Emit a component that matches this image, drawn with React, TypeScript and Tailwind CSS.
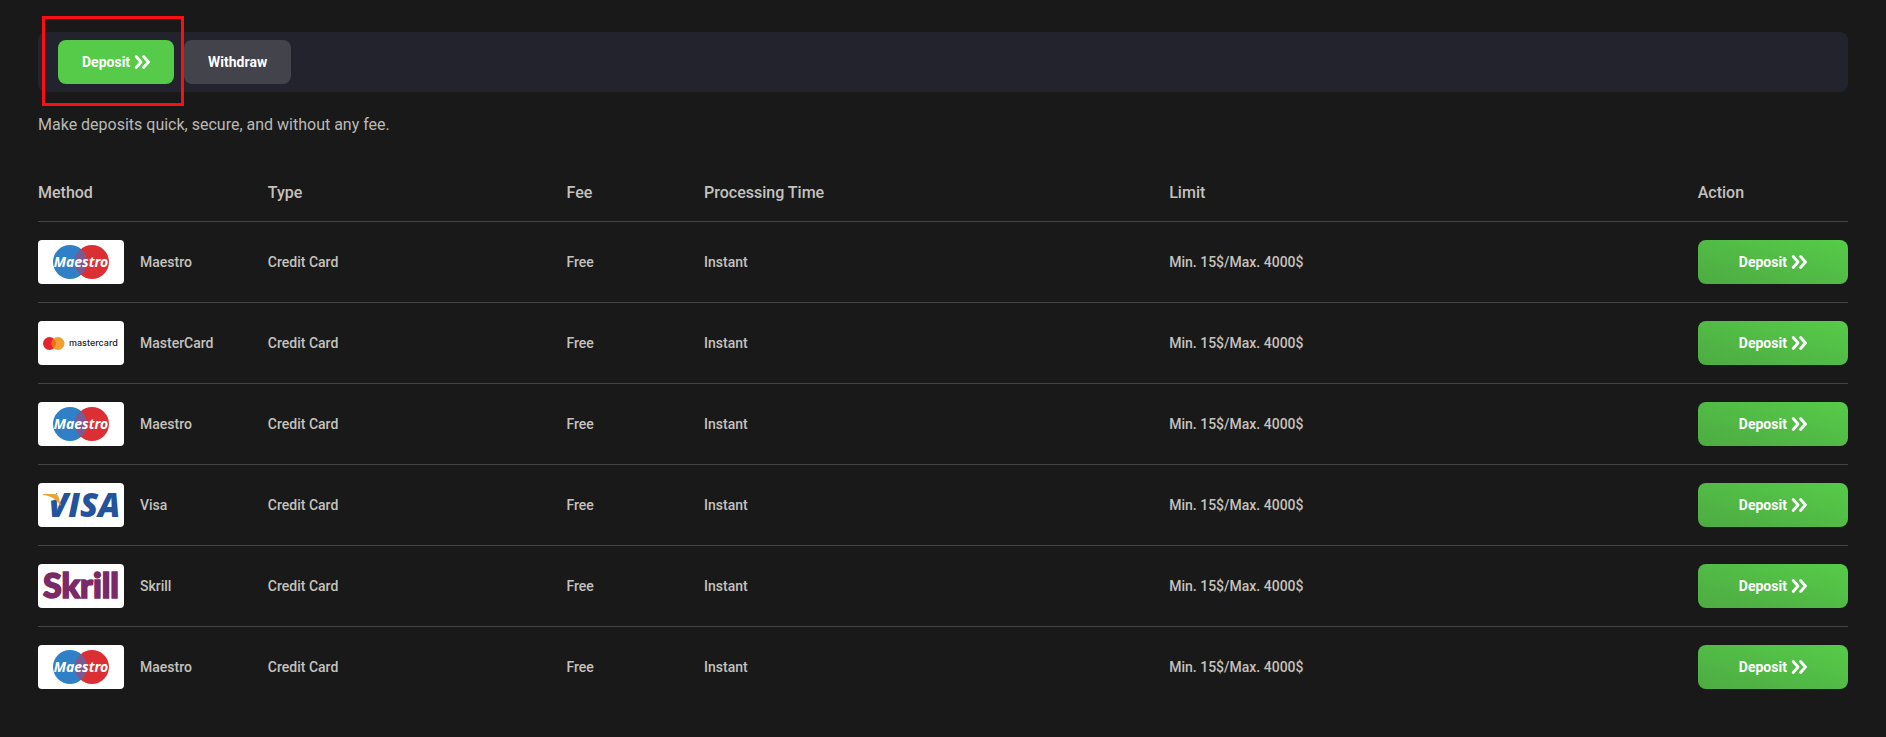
import React from "react";

type Brand = "maestro" | "mastercard" | "visa" | "skrill";

interface PaymentMethod {
  id: number;
  brand: Brand;
  name: string;
}

const METHODS: PaymentMethod[] = [
  { id: 1, brand: "maestro", name: "Maestro" },
  { id: 2, brand: "mastercard", name: "MasterCard" },
  { id: 3, brand: "maestro", name: "Maestro" },
  { id: 4, brand: "visa", name: "Visa" },
  { id: 5, brand: "skrill", name: "Skrill" },
  { id: 6, brand: "maestro", name: "Maestro" },
];

const COLUMNS = [
  { label: "Method", width: "w-[12.7%]" },
  { label: "Type", width: "w-[16.5%]" },
  { label: "Fee", width: "w-[7.6%]" },
  { label: "Processing Time", width: "w-[25.7%]" },
  { label: "Limit", width: "w-[29.2%]" },
  { label: "Action", width: "w-[8.3%]" },
];

const DoubleChevron: React.FC = () => (
  <svg
    width="16"
    height="16"
    viewBox="0 0 16 16"
    fill="none"
    stroke="currentColor"
    strokeWidth="2.8"
    strokeLinecap="round"
    strokeLinejoin="round"
    aria-hidden="true"
  >
    <path d="M2.2 2.5 7 8l-4.8 5.5" />
    <path d="M9.6 2.5 14.5 8l-4.9 5.5" />
  </svg>
);

const LOGOS: Record<Brand, React.ReactNode> = {
  maestro: (
    <>
      <circle cx="32" cy="22" r="17" fill="#2f80c6" />
      <circle cx="54" cy="22" r="17" fill="#dc2f34" />
      <path d="M43 9a17 17 0 0 1 0 26a17 17 0 0 1 0-26z" fill="#7c5a91" />
      <text
        x="43"
        y="27"
        textAnchor="middle"
        fill="#fff"
        className="font-['Noto_Sans','Open_Sans',sans-serif] text-[14px] font-bold italic"
      >
        Maestro
      </text>
    </>
  ),
  mastercard: (
    <>
      <circle cx="11.5" cy="22.5" r="6.5" fill="#e3262d" />
      <circle cx="20" cy="22.5" r="6.5" fill="#f0a02f" />
      <path d="M15.75 17.6a6.5 6.5 0 0 1 0 9.8a6.5 6.5 0 0 1 0-9.8z" fill="#f26a22" />
      <text x="31" y="25" fill="#222" className="font-[Inter,sans-serif] text-[9px] font-medium">
        mastercard
      </text>
    </>
  ),
  visa: (
    <>
      <text
        x="10"
        y="34"
        fill="#22539b"
        className="font-['Open_Sans',sans-serif] text-[33px] font-extrabold italic"
      >
        VISA
      </text>
      <path d="M4 10v4c3 0 6 1 8 4l8-2-2-6z" fill="#fff" />
      <path d="M5 11h11c3 0 4 1 5 4l2 8C19 18 15 13 5 12z" fill="#eca434" />
    </>
  ),
  skrill: (
    <text
      x="5"
      y="34"
      fill="#7b2a68"
      stroke="#7b2a68"
      strokeWidth="1.6"
      className="font-[Lato,sans-serif] text-[34px] font-black"
    >
      Skrill
    </text>
  ),
};

const BrandLogo: React.FC<{ brand: Brand }> = ({ brand }) => (
  <svg width="86" height="44" viewBox="0 0 86 44" className="shrink-0 rounded bg-white" aria-hidden="true">
    {LOGOS[brand]}
  </svg>
);

const Tabs: React.FC = () => (
  <div className="flex items-center gap-2.5 rounded-lg bg-[#23232d] px-5 py-2">
    <div className="relative">
      <button
        type="button"
        className="flex h-11 items-center gap-1 rounded-lg bg-[#56cb49] px-6 text-sm font-bold text-white"
      >
        Deposit
        <DoubleChevron />
      </button>
      {/* Highlight frame */}
      <span className="pointer-events-none absolute -top-6 -right-2.5 -bottom-[22px] -left-4 border-3 border-[#fa0f14]" />
    </div>
    <button type="button" className="h-11 rounded-lg bg-[#43434b] px-6 text-sm font-bold text-white">
      Withdraw
    </button>
  </div>
);

const MethodsTable: React.FC = () => (
  <table className="w-full table-fixed text-left text-[#c4c2be]">
    <thead>
      <tr className="border-b border-[#434645]">
        {COLUMNS.map((col) => (
          <th key={col.label} scope="col" className={`${col.width} py-4 font-medium`}>
            {col.label}
          </th>
        ))}
      </tr>
    </thead>
    <tbody className="text-sm font-medium">
      {METHODS.map((method) => (
        <tr key={method.id} className="border-b border-[#434645] last:border-0">
          <td className="py-[18px]">
            <div className="flex items-center gap-4">
              <BrandLogo brand={method.brand} />
              {method.name}
            </div>
          </td>
          <td>Credit Card</td>
          <td>Free</td>
          <td>Instant</td>
          <td>Min. 15$/Max. 4000$</td>
          <td>
            <button
              type="button"
              className="flex h-11 w-full items-center justify-center gap-1 rounded-lg bg-linear-to-tr from-[#4dab42] to-[#56cb49] font-bold text-white"
            >
              Deposit
              <DoubleChevron />
            </button>
          </td>
        </tr>
      ))}
    </tbody>
  </table>
);

export default function App() {
  return (
    <main className="min-h-screen bg-[#191919] px-[38px] pt-8 font-[Roboto,sans-serif]">
      <Tabs />
      <p className="mt-[21px] mb-7 text-base text-[#bbb9b6]">Make deposits quick, secure, and without any fee.</p>
      <MethodsTable />
    </main>
  );
}
